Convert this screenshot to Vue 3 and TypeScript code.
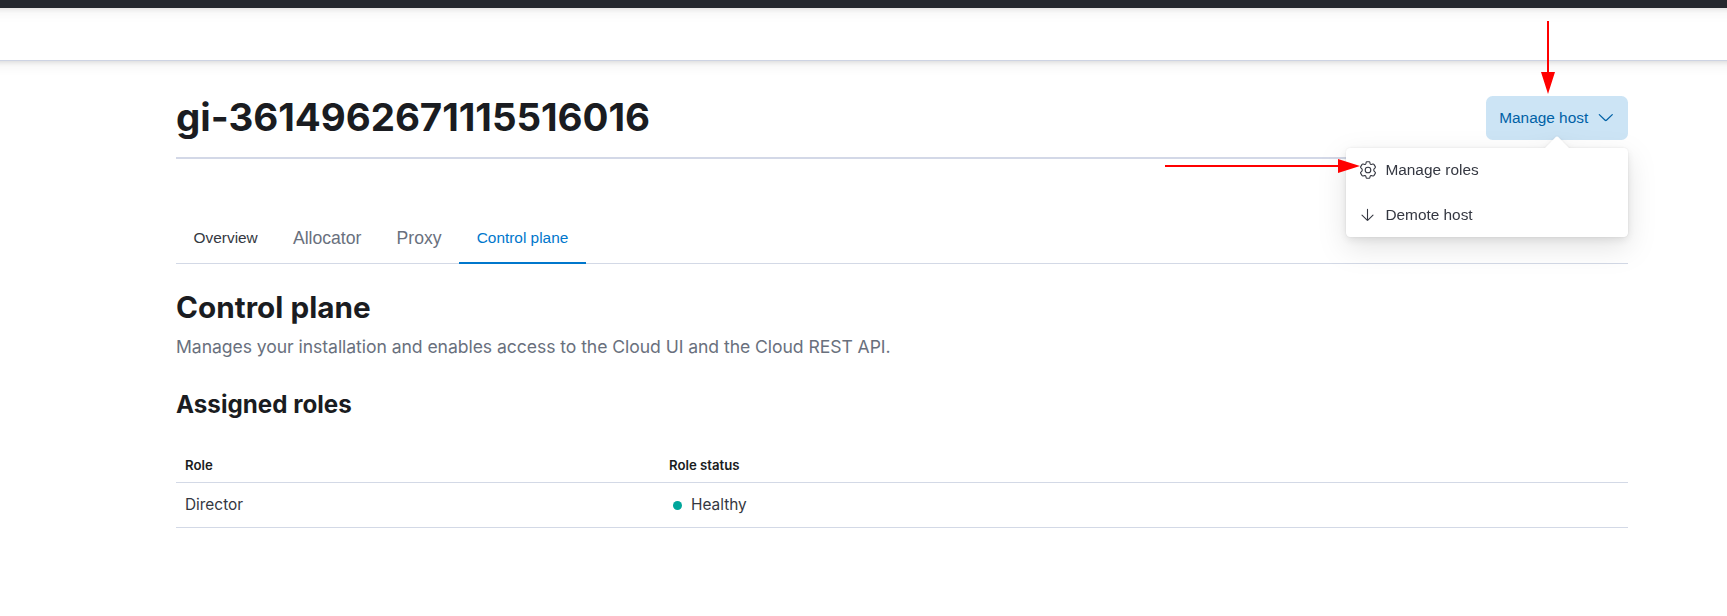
<script setup lang="ts">
interface Tab {
  label: string
  variant: 'compact' | 'large'
  selected?: boolean
}

interface Role {
  name: string
  status: string
}

const tabs: Tab[] = [
  { label: 'Overview', variant: 'compact' },
  { label: 'Allocator', variant: 'large' },
  { label: 'Proxy', variant: 'large' },
  { label: 'Control plane', variant: 'compact', selected: true },
]

const roles: Role[] = [{ name: 'Director', status: 'Healthy' }]
</script>

<template>
  <div class="page">
    <header class="top-bar"></header>
    <div class="sub-bar"></div>

    <main class="content">
      <div class="title-row">
        <h1 class="title">gi-3614962671115516016</h1>
        <div class="menu-anchor">
          <button class="manage" type="button">
            <span>Manage host</span>
            <svg class="chevron" viewBox="0 0 16 16" fill="none" stroke="currentColor" stroke-width="1.15" stroke-linecap="round" stroke-linejoin="round">
              <path d="M2.1 5.1 7.4 10.2Q8 10.7 8.6 10.2L13.9 5.1" />
            </svg>
          </button>
          <div class="popover">
            <svg class="beak" viewBox="0 0 26 13"><path d="M0 13 12 .8Q13 0 14 .8L26 13Z" fill="#fff" /></svg>
            <button class="item" type="button">
              <svg class="icon" viewBox="0 0 18 18" fill="none" stroke="currentColor" stroke-width="1.1" stroke-linejoin="round">
                <path d="M7.1 1.5Q7.2.8 7.9.8H10.1Q10.8.8 10.9 1.5L11.1 2.7Q11.4 3.6 12.3 3.5L13.9 3Q14.6 2.8 14.9 3.4L16.3 5.6Q16.7 6.3 16.1 6.8L15.1 7.8Q14.3 9 15.1 10.2L16.1 11.2Q16.7 11.7 16.3 12.4L14.9 14.6Q14.6 15.2 13.9 15L12.3 14.5Q11.4 14.4 11.1 15.3L10.9 16.5Q10.8 17.2 10.1 17.2H7.9Q7.2 17.2 7.1 16.5L6.9 15.3Q6.6 14.4 5.7 14.5L4.1 15Q3.4 15.2 3.1 14.6L1.7 12.4Q1.3 11.7 1.9 11.2L2.9 10.2Q3.7 9 2.9 7.8L1.9 6.8Q1.3 6.3 1.7 5.6L3.1 3.4Q3.4 2.8 4.1 3L5.7 3.5Q6.6 3.6 6.9 2.7Z" />
                <circle cx="9" cy="9" r="2.8" />
              </svg>
              <span>Manage roles</span>
            </button>
            <button class="item" type="button">
              <svg class="icon" viewBox="0 0 18 18" fill="none" stroke="currentColor" stroke-width="1.1" stroke-linecap="round" stroke-linejoin="round">
                <path d="M8.5 3.4V14.2M3 9.1 8.1 14.1Q8.5 14.5 8.9 14.1L14 9.1" />
              </svg>
              <span>Demote host</span>
            </button>
          </div>
        </div>
      </div>

      <nav class="tabs">
        <a v-for="tab in tabs" :key="tab.label" class="tab" :class="[tab.variant, { selected: tab.selected }]">{{ tab.label }}</a>
      </nav>

      <h2 class="section-title"><span>Control plane</span></h2>
      <p class="description"><span>Manages your installation and enables access to the Cloud UI and the Cloud REST API.</span></p>
      <h3 class="sub-title"><span>Assigned roles</span></h3>

      <div class="table">
        <div class="row head">
          <span>Role</span>
          <span>Role status</span>
        </div>
        <div v-for="role in roles" :key="role.name" class="row">
          <span>{{ role.name }}</span>
          <span class="health"><i class="dot"></i>{{ role.status }}</span>
        </div>
      </div>
    </main>

    <svg class="arrows" viewBox="0 0 1727 616" fill="#f00" stroke="none">
      <path d="M1547 21H1549V72H1547ZM1541 72H1555L1548 94Z" />
      <path d="M1165 165H1338V167H1165ZM1338 159V173L1360 166Z" />
    </svg>
  </div>
</template>

<style>
body {
  background: #fff;
  overflow: hidden;
}
</style>

<style scoped>
.page {
  position: relative;
  box-sizing: border-box;
  width: 1727px;
  height: 616px;
  overflow: hidden;
  background: #fff;
  color: #343741;
  font-family: Inter, "Liberation Sans", sans-serif;
}
.top-bar {
  position: relative;
  height: 8px;
  margin: 0 -24px;
  background: #25282f;
  box-shadow: 0 1px 5px rgba(0, 0, 0, 0.1), 0 3.6px 13px rgba(0, 0, 0, 0.07);
  z-index: 1;
}
.sub-bar {
  box-sizing: border-box;
  height: 53px;
  margin: 0 -24px;
  border-bottom: 1px solid #cdd3e3;
  box-shadow: 0 1px 5px rgba(0, 0, 0, 0.1), 0 3.6px 13px rgba(0, 0, 0, 0.07);
}
.content {
  width: 1452px;
  padding-top: 35px;
  margin-left: 176px;
}
.title-row {
  box-sizing: border-box;
  display: flex;
  justify-content: space-between;
  height: 63px;
  border-bottom: 2px solid #d3d8e7;
}
h1, h2, h3, p {
  margin: 0;
}
h1, h2, h3 {
  color: #1a1c21;
  font-weight: 700;
}
.title {
  font-size: 38.5px;
  line-height: 42px;
  letter-spacing: -0.04px;
}
.menu-anchor {
  position: relative;
}
button {
  font: 15.4px "Liberation Sans", Arial, sans-serif;
  border: 0;
  padding: 0;
  background: none;
}
.manage {
  display: flex;
  align-items: center;
  justify-content: space-between;
  width: 142px;
  height: 44px;
  padding: 0 13px 0 13.2px;
  border-radius: 6.6px;
  background: #cce4f5;
  color: #0061a6;
}
.chevron {
  width: 17.6px;
  height: 17.6px;
}
.popover {
  position: absolute;
  top: 52px;
  right: 0;
  width: 282px;
  height: 89px;
  border-radius: 4.4px;
  background: #fff;
  filter: drop-shadow(0 0 1px rgba(0, 0, 0, 0.08)) drop-shadow(0 3px 4px rgba(0, 0, 0, 0.08)) drop-shadow(0 10px 14px rgba(0, 0, 0, 0.11));
}
.beak {
  position: absolute;
  top: -12px;
  left: 198px;
  width: 26px;
  height: 13px;
}
.item {
  display: flex;
  align-items: center;
  gap: 8px;
  width: 100%;
  height: 45px;
  padding: 0 0 1px 13.4px;
  color: #343741;
}
.icon {
  width: 18px;
  height: 18px;
}
.tabs {
  box-sizing: border-box;
  display: flex;
  height: 53px;
  margin-top: 52px;
  border-bottom: 1px solid #d3d9e6;
}
.tab {
  box-sizing: border-box;
  height: 53px;
  padding: 0 17.6px;
  font-family: "Liberation Sans", Arial, sans-serif;
  line-height: 54px;
}
.compact {
  font-size: 15.4px;
}
.large {
  color: #69707d;
  font-size: 17.6px;
}
.selected {
  border-bottom: 2px solid #0077cc;
  color: #0077cc;
}
.section-title {
  margin-top: 25px;
  font-size: 29.7px;
  line-height: 36px;
  letter-spacing: 0.03px;
}
.description {
  margin-top: 9px;
  color: #69707d;
  font-size: 17.6px;
  line-height: 26px;
  letter-spacing: -0.065px;
}
.sub-title {
  margin-top: 32px;
  font-size: 24.2px;
  line-height: 26px;
}
.table {
  margin-top: 31px;
}
.row {
  box-sizing: border-box;
  display: grid;
  grid-template-columns: 484px 1fr;
  align-items: center;
  height: 45px;
  padding: 0 0 2px 9px;
  border-bottom: 1px solid #d3d9e6;
  font-size: 15.4px;
}
.head {
  height: 34px;
  color: #1a1c21;
  font-size: 13.2px;
  font-weight: 600;
}
.health {
  display: flex;
  align-items: center;
}
.dot {
  width: 9px;
  height: 9px;
  margin: 2px 9px 0 4px;
  border-radius: 50%;
  background: #00a69b;
}
.arrows {
  position: absolute;
  inset: 0;
  width: 1727px;
  height: 616px;
  pointer-events: none;
}
</style>
